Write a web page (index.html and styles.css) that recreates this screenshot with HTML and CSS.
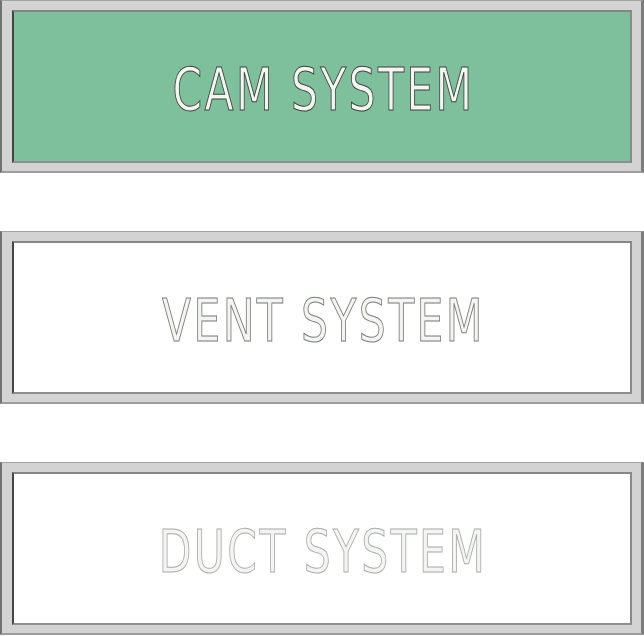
FILE: index.html
```html
<!DOCTYPE html>
<html>
<head>
<meta charset="utf-8">
<link rel="stylesheet" href="styles.css">
</head>
<body>
<div class="stack">
  <div class="btn">
    <div class="face face-on"><span class="label label-on">CAM SYSTEM</span></div>
  </div>
  <div class="btn">
    <div class="face"><span class="label label-mid">VENT SYSTEM</span></div>
  </div>
  <div class="btn">
    <div class="face"><span class="label label-dim">DUCT SYSTEM</span></div>
  </div>
</div>
</body>
</html>
```
FILE: styles.css
```css
html, body {
  margin: 0;
  padding: 0;
  background: #ffffff;
}
.stack {
  display: flex;
  flex-direction: column;
  gap: 58px;
  width: 644px;
}
.btn {
  box-sizing: border-box;
  height: 173px;
  background: #d3d3d3;
  border-left: 2px solid #707070;
  border-top: 1px solid #a2a2a2;
  border-right: 3px solid #7c7c7c;
  border-bottom: 2px solid #9c9c9c;
  padding: 9px 9px 8px 10px;
  display: flex;
}
.face {
  flex: 1;
  background: #ffffff;
  border-top: 2px solid #858585;
  border-left: 2px solid #454545;
  border-right: 2px solid #8a8a8a;
  border-bottom: 2px solid #8e8e8e;
  display: flex;
  align-items: center;
  justify-content: center;
}
.face-on {
  background: #7dc09b;
}
.label {
  display: inline-block;
  font-family: "DejaVu Sans Condensed", "DejaVu Sans", sans-serif;
  font-stretch: condensed;
  font-size: 59px;
  line-height: 1;
  letter-spacing: 3px;
  color: #f3f5f0;
  -webkit-text-stroke: 1px #555;
  transform: scaleX(0.8);
  padding-top: 6px;
  padding-left: 3px;
}
.label-on {
  -webkit-text-stroke-color: #3f3f3f;
}
.label-mid {
  -webkit-text-stroke-color: #7a7a7a;
}
.label-dim {
  -webkit-text-stroke-color: #ababab;
}
```
